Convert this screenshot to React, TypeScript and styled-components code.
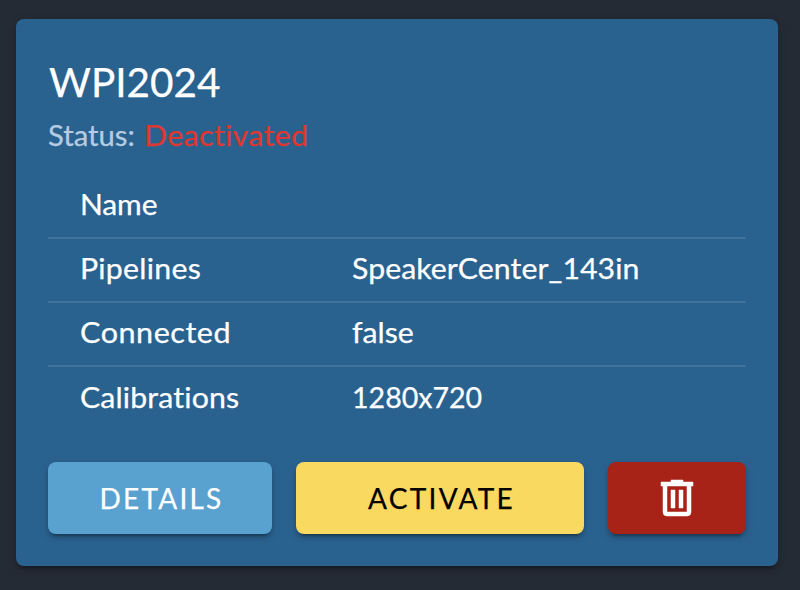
import React from 'react';
import styled, { createGlobalStyle } from 'styled-components';

const GlobalStyle = createGlobalStyle`
  *, *::before, *::after {
    box-sizing: border-box;
  }
  body {
    margin: 0;
    background: #252b35;
    font-family: Lato, 'Open Sans', sans-serif;
    font-size: 28px;
    font-variant-ligatures: none;
    color: #fff;
    overflow: hidden;
  }
`;

const Page = styled.main`
  height: 590px;
  padding: 19px 22px 24px 16px;
`;

const Card = styled.article`
  display: flex;
  flex-direction: column;
  height: 547px;
  padding: 40px 32px 32px;
  border-radius: 8px;
  background: #2a628f;
  box-shadow:
    0 6px 2px -4px rgba(0, 0, 0, 0.2),
    0 4px 4px rgba(0, 0, 0, 0.14),
    0 2px 10px rgba(0, 0, 0, 0.12);
`;

/* Widened lettering: a horizontal stretch plus a little tracking. */
const Label = styled.span<{ $tracking?: number; $stretch?: number }>`
  display: inline-block;
  letter-spacing: ${({ $tracking = 0 }) => $tracking}px;
  transform: scaleX(${({ $stretch = 1 }) => $stretch});
  transform-origin: left center;
  white-space: nowrap;
  -webkit-text-stroke: 0.25px currentColor;
`;

const Title = styled.h2`
  margin: 0;
  padding-left: 1px;
  font-size: 40px;
  font-weight: 400;
  line-height: 46px;
`;

const Status = styled.p`
  display: flex;
  gap: 13px;
  margin: 12px 0 0;
  line-height: 36px;
  color: #b5cce2;
`;

const StatusValue = styled(Label)`
  color: #e0362f;
`;

const Table = styled.table`
  width: 100%;
  margin-top: 22px;
  border-collapse: separate;
  border-spacing: 0;
  table-layout: fixed;
`;

const Row = styled.tr`
  height: 64px;

  &:not(:last-child) > td {
    border-bottom: 2px solid #3f739c;
  }
`;

const Cell = styled.td<{ $width?: number }>`
  width: ${({ $width }) => ($width ? `${$width}px` : 'auto')};
  padding: 0 0 4px 32px;
  line-height: 34px;
  vertical-align: middle;
`;

const Actions = styled.div`
  display: grid;
  grid-template-columns: 224px 288px 138px;
  gap: 24px;
  margin-top: auto;
`;

const Button = styled.button<{ $background: string; $color?: string }>`
  display: flex;
  align-items: center;
  justify-content: center;
  height: 72px;
  padding: 0;
  border: 0;
  border-radius: 8px;
  background: ${({ $background }) => $background};
  color: ${({ $color }) => $color ?? '#fff'};
  font: inherit;
  line-height: 34px;
  box-shadow:
    0 6px 2px -4px rgba(0, 0, 0, 0.2),
    0 4px 4px rgba(0, 0, 0, 0.14),
    0 2px 10px rgba(0, 0, 0, 0.12);
`;

const TextButton = styled(Button)`
  padding-left: 3px;
`;

const Icon = styled.svg`
  width: 48px;
  height: 48px;
  fill: currentColor;
  stroke: currentColor;
  stroke-width: 0.25;
`;

type Text = { text: string; tracking: number; stretch: number };

const rows: { label: Text; value?: Text }[] = [
  { label: { text: 'Name', tracking: -0.1, stretch: 1.07 } },
  {
    label: { text: 'Pipelines', tracking: 0.25, stretch: 1.08 },
    value: { text: 'SpeakerCenter_143in', tracking: 0.05, stretch: 1.08 },
  },
  {
    label: { text: 'Connected', tracking: 0.5, stretch: 1.09 },
    value: { text: 'false', tracking: 0, stretch: 1.08 },
  },
  {
    label: { text: 'Calibrations', tracking: 0.15, stretch: 1.08 },
    value: { text: '1280x720', tracking: 0, stretch: 1.02 },
  },
];

const renderText = ({ text, tracking, stretch }: Text) => (
  <Label $tracking={tracking} $stretch={stretch}>
    {text}
  </Label>
);

export default function App() {
  return (
    <>
      <GlobalStyle />
      <Page>
        <Card>
          <Title>
            <Label $stretch={1.012}>WPI2024</Label>
          </Title>
          <Status>
            <Label $stretch={1.045}>Status:</Label>
            <StatusValue $tracking={0.35} $stretch={1.08}>
              Deactivated
            </StatusValue>
          </Status>
          <Table>
            <tbody>
              {rows.map(({ label, value }) => (
                <Row key={label.text}>
                  <Cell $width={272}>{renderText(label)}</Cell>
                  <Cell>{value && renderText(value)}</Cell>
                </Row>
              ))}
            </tbody>
          </Table>
          <Actions>
            <TextButton $background="#59a1cf">
              <Label $tracking={2.2}>DETAILS</Label>
            </TextButton>
            <TextButton $background="#f9d95f" $color="#000">
              <Label $tracking={2.3}>ACTIVATE</Label>
            </TextButton>
            <Button $background="#a72217" aria-label="Delete">
              <Icon viewBox="0 0 24 24">
                <path d="M9,3V4H4V6H5V19A2,2 0 0,0 7,21H17A2,2 0 0,0 19,19V6H20V4H15V3H9M7,6H17V19H7V6M9,8V17H11V8H9M13,8V17H15V8H13Z" />
              </Icon>
            </Button>
          </Actions>
        </Card>
      </Page>
    </>
  );
}
